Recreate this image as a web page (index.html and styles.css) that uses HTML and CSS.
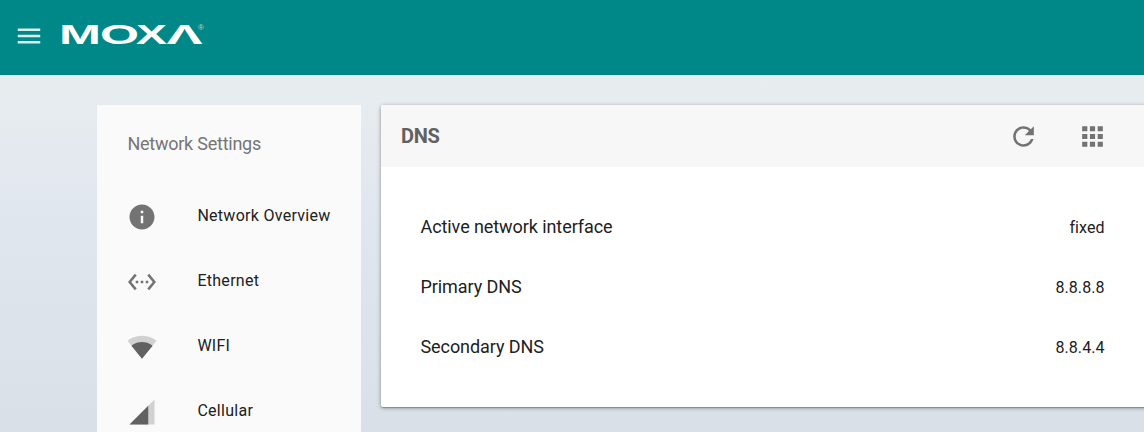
FILE: index.html
```html
<!DOCTYPE html>
<html lang="en">
<head>
<meta charset="utf-8">
<title>Network Settings</title>
<link rel="stylesheet" href="styles.css">
</head>
<body>
<header class="topbar">
  <svg class="icon menu" viewBox="0 0 24 24"><path d="M3 18h18v-2H3v2zm0-5h18v-2H3v2zm0-7v2h18V6H3z"/></svg>
  <svg class="logo" viewBox="0 0 144 26" role="img" aria-label="MOXA">
    <text x="-3" y="22.5" textLength="42" lengthAdjust="spacingAndGlyphs">M</text>
    <text x="38" y="22.5" textLength="39" lengthAdjust="spacingAndGlyphs">O</text>
    <text x="74" y="22.5" textLength="31" lengthAdjust="spacingAndGlyphs">X</text>
    <text x="104.5" y="22.5" textLength="36" lengthAdjust="spacingAndGlyphs">Λ</text>
    <text class="reg" x="136" y="9">®</text>
  </svg>
</header>
<main class="layout">
  <nav class="sidebar">
    <h2 class="sidebar-title">Network Settings</h2>
    <a class="nav-item"><svg class="icon" viewBox="0 0 24 24"><path d="M12 2C6.48 2 2 6.48 2 12s4.48 10 10 10 10-4.48 10-10S17.52 2 12 2zm1 15h-2v-6h2v6zm0-8h-2V7h2v2z"/></svg><span>Network Overview</span></a>
    <a class="nav-item"><svg class="icon" viewBox="0 0 24 24"><path d="M7.77 6.76L6.23 5.48.82 12l5.41 6.52 1.54-1.28L3.42 12l4.35-5.24zM7 13h2v-2H7v2zm10-2h-2v2h2v-2zm-6 2h2v-2h-2v2zm6.77-7.52l-1.54 1.28L20.58 12l-4.35 5.24 1.54 1.28L23.18 12l-5.41-6.52z"/></svg><span>Ethernet</span></a>
    <a class="nav-item"><svg class="icon signal" viewBox="0 0 24 24"><path class="faint" d="M12.01 21.49L23.64 7c-.45-.34-4.93-4-11.64-4C5.28 3 .81 6.66.36 7l11.63 14.49.01.01.01-.01z"/><path d="M3.53 10.95l8.46 10.54.01.01.01-.01 8.46-10.54C20.04 10.62 16.81 8 12 8c-4.81 0-8.04 2.62-8.47 2.95z"/></svg><span>WIFI</span></a>
    <a class="nav-item"><svg class="icon signal" viewBox="0 0 24 24"><path class="faint" d="M2 22h20V2z"/><path d="M17 7L2 22h15z"/></svg><span>Cellular</span></a>
  </nav>
  <section class="card">
    <div class="card-head">
      <h1 class="card-title">DNS</h1>
      <svg class="icon action" viewBox="0 0 24 24"><path d="M17.65 6.35C16.2 4.9 14.21 4 12 4c-4.42 0-7.99 3.58-7.99 8s3.57 8 7.99 8c3.73 0 6.84-2.55 7.73-6h-2.08c-.82 2.33-3.04 4-5.65 4-3.31 0-6-2.69-6-6s2.69-6 6-6c1.66 0 3.14.69 4.22 1.78L13 11h7V4l-2.35 2.35z"/></svg>
      <svg class="icon action" viewBox="0 0 24 24"><path d="M4 8h4V4H4v4zm6 12h4v-4h-4v4zm-6 0h4v-4H4v4zm0-6h4v-4H4v4zm6 0h4v-4h-4v4zm6-10v4h4V4h-4zm-6 4h4V4h-4v4zm6 6h4v-4h-4v4zm0 6h4v-4h-4v4z"/></svg>
    </div>
    <div class="rows">
      <div class="row"><span class="label">Active network interface</span><span class="value">fixed</span></div>
      <div class="row"><span class="label">Primary DNS</span><span class="value">8.8.8.8</span></div>
      <div class="row"><span class="label">Secondary DNS</span><span class="value">8.8.4.4</span></div>
    </div>
  </section>
</main>
</body>
</html>
```
FILE: styles.css
```css
* { box-sizing: border-box; }
body {
  margin: 0;
  height: 432px;
  overflow: hidden;
  font-family: Roboto, sans-serif;
  color: #212121;
  background: #dde4ea;
}
.topbar {
  height: 75px;
  background: #008787;
  display: flex;
  align-items: flex-start;
  padding: 21px 0 0 14px;
}
.icon {
  display: block;
  width: 30px;
  height: 30px;
  flex: none;
  fill: #737373;
}
.icon.menu { fill: #d9eded; }
.logo {
  width: 144px;
  height: 26px;
  margin-left: 18px;
  overflow: visible;
  fill: #fff;
  font: bold 27px "Liberation Sans", Arial, sans-serif;
}
.logo .reg { font-size: 8px; font-weight: normal; fill: #b5dcdc; }
.layout {
  display: grid;
  grid-template-columns: 264px 783px;
  gap: 20px;
  height: 357px;
  padding: 30px 0 0 97px;
  background: linear-gradient(#e8edf0, #e0e6ee 42%, #d9e0e8);
}
.sidebar {
  background: #fafafa;
  height: 327px;
  overflow: hidden;
  padding: 27px 0 0 30px;
}
.sidebar-title {
  margin: 0 0 29px;
  padding-left: .4px;
  font-size: 18px;
  line-height: 24px;
  font-weight: 400;
  letter-spacing: -.24px;
  color: #757575;
}
.nav-item {
  display: flex;
  align-items: center;
  gap: 40.4px;
  height: 65px;
  padding-bottom: 1px;
  font-size: 16px;
  letter-spacing: .28px;
}
.nav-item span { padding-bottom: 3px; }
.icon.signal { fill: #616161; }
.icon .faint { fill: #d1d1d1; }
.card {
  height: 302px;
  background: #fff;
  border-radius: 2px;
  box-shadow: 0 1px 1px rgba(0,0,0,.22), 0 1px 4px rgba(0,0,0,.36);
  align-self: start;
}
.card-head {
  height: 62px;
  display: flex;
  align-items: center;
  background: #f7f7f7;
  border-radius: 2px 2px 0 0;
  padding: 0 56.5px 0 20px;
  gap: 38px;
}
.card-title {
  margin: 0 auto 0 0;
  font-size: 20px;
  font-weight: 700;
  letter-spacing: -.3px;
  color: #616161;
}
.icon.action { width: 31px; height: 31px; }
.rows { padding: 30px 59.5px 0 39.5px; }
.row {
  height: 60px;
  display: flex;
  justify-content: space-between;
  align-items: center;
}
.label { font-size: 18px; letter-spacing: -.08px; padding-bottom: 2px; }
.value { font-size: 16px; letter-spacing: .05px; padding-top: 1px; }
```
